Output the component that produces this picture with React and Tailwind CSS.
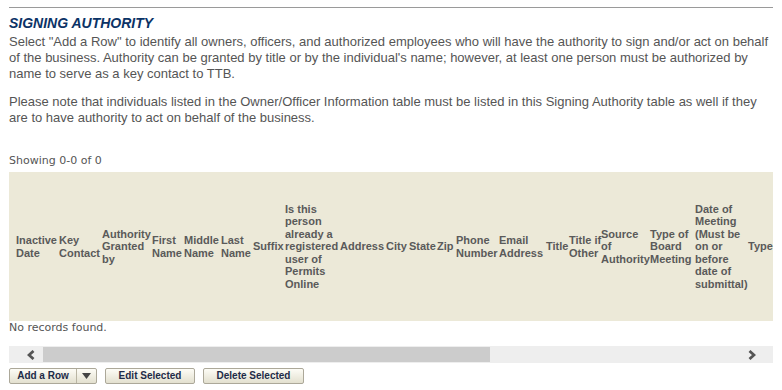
import React from "react";

const columns = [
  { w: "w-[50px] pl-[7px]", lines: ["Inactive", "Date"] },
  { w: "w-[43px]", lines: ["Key", "Contact"] },
  { w: "w-[50px]", lines: ["Authority", "Granted", "by"] },
  { w: "w-[32px]", lines: ["First", "Name"] },
  { w: "w-[37px]", lines: ["Middle", "Name"] },
  { w: "w-[32px]", lines: ["Last", "Name"] },
  { w: "w-[32px]", lines: ["Suffix"] },
  {
    w: "w-[55px]",
    lines: ["Is this", "person", "already a", "registered", "user of", "Permits", "Online"],
  },
  { w: "w-[46px]", lines: ["Address"] },
  { w: "w-[23px]", lines: ["City"] },
  { w: "w-[28px]", lines: ["State"] },
  { w: "w-[19px]", lines: ["Zip"] },
  { w: "w-[43px]", lines: ["Phone", "Number"] },
  { w: "w-[47px]", lines: ["Email", "Address"] },
  { w: "w-[23px]", lines: ["Title"] },
  { w: "w-[32px]", lines: ["Title if", "Other"] },
  { w: "w-[49px]", lines: ["Source", "of", "Authority"] },
  { w: "w-[45px]", lines: ["Type of", "Board", "Meeting"] },
  {
    w: "w-[53px]",
    lines: ["Date of", "Meeting", "(Must be", "on or", "before", "date of", "submittal)"],
  },
  { w: "w-[25px]", lines: ["Type"] },
];

function Chevron({ dir }) {
  return (
    <svg width="8" height="10" viewBox="0 0 8 10">
      <polyline
        points={dir === "left" ? "6.5,1 2,5 6.5,9" : "1.5,1 6,5 1.5,9"}
        fill="none"
        stroke="#555555"
        strokeWidth="2.8"
      />
    </svg>
  );
}

function Button({ className = "", children }) {
  return (
    <button
      className={`flex h-[16px] items-center justify-center rounded-[2px] border border-[#aca899] bg-gradient-to-b from-[#fdfcf6] to-[#e3e0cf] text-[10px] font-bold leading-none text-[#1e2b48] ${className}`}
    >
      {children}
    </button>
  );
}

export default function App() {
  return (
    <div className="bg-white px-[9px] pt-[7px] font-['Liberation_Sans',Arial,sans-serif]">
      {/* Section title */}
      <div className="border-t border-[#9a9a9a]" />
      <h2 className="mt-[7px] text-[14px] leading-4 font-bold italic text-[#0b3366]">
        SIGNING AUTHORITY
      </h2>
      <p className="mt-[3px] text-[13px] leading-4 text-[#555555]">
        Select "Add a Row" to identify all owners, officers, and authorized employees who will have the
        authority to sign and/or act on behalf of the business. Authority can be granted by title or by the
        individual's name; however, at least one person must be authorized by name to serve as a key
        contact to TTB.
      </p>
      <p className="mt-3 text-[13px] leading-4 text-[#555555]">
        Please note that individuals listed in the Owner/Officer Information table must be listed in this
        Signing Authority table as well if they are to have authority to act on behalf of the business.
      </p>

      {/* Grid */}
      <div className="mt-[28px] font-['DejaVu_Sans',Verdana,sans-serif] text-[11px] leading-[13px] text-[#555555]">
        Showing 0-0 of 0
      </div>
      <div className="mt-[5px]">
        <div className="flex h-[149px] items-center bg-[#ece9d8] text-[11px] leading-[12.5px] font-bold text-[#5a5a5a]">
          {columns.map((col) => (
            <div key={col.lines.join(" ")} className={`shrink-0 whitespace-nowrap ${col.w}`}>
              {col.lines.map((line) => (
                <div key={line}>{line}</div>
              ))}
            </div>
          ))}
        </div>
        <div className="font-['DejaVu_Sans',Verdana,sans-serif] text-[11px] leading-[13px] text-[#555555]">
          No records found.
        </div>
      </div>

      {/* Horizontal scrollbar */}
      <div className="mt-3 flex h-[17px] bg-[#eeeeee]">
        <div className="flex w-[34px] items-center justify-end pr-[8px]">
          <Chevron dir="left" />
        </div>
        <div className="flex flex-1 py-[1px]">
          <div className="w-[447px] bg-[#cccccc]" />
        </div>
        <div className="flex w-[34px] items-center pl-[9px]">
          <Chevron dir="right" />
        </div>
      </div>

      {/* Actions */}
      <div className="mt-[5px] flex items-center gap-2 pb-[6px]">
        <div className="flex h-[16px] rounded-[2px] border border-[#aca899] bg-gradient-to-b from-[#fdfcf6] to-[#e3e0cf]">
          <span className="flex w-[67px] items-center justify-center border-r border-[#b9b5a3] text-[10px] font-bold leading-none text-[#1e2b48]">
            Add a Row
          </span>
          <span className="flex w-[19px] items-center justify-center">
            <svg width="9" height="6" viewBox="0 0 9 6">
              <polygon points="0,0 9,0 4.5,6" fill="#444444" />
            </svg>
          </span>
        </div>
        <Button className="w-[90px]">Edit Selected</Button>
        <Button className="w-[101px]">Delete Selected</Button>
      </div>
    </div>
  );
}
